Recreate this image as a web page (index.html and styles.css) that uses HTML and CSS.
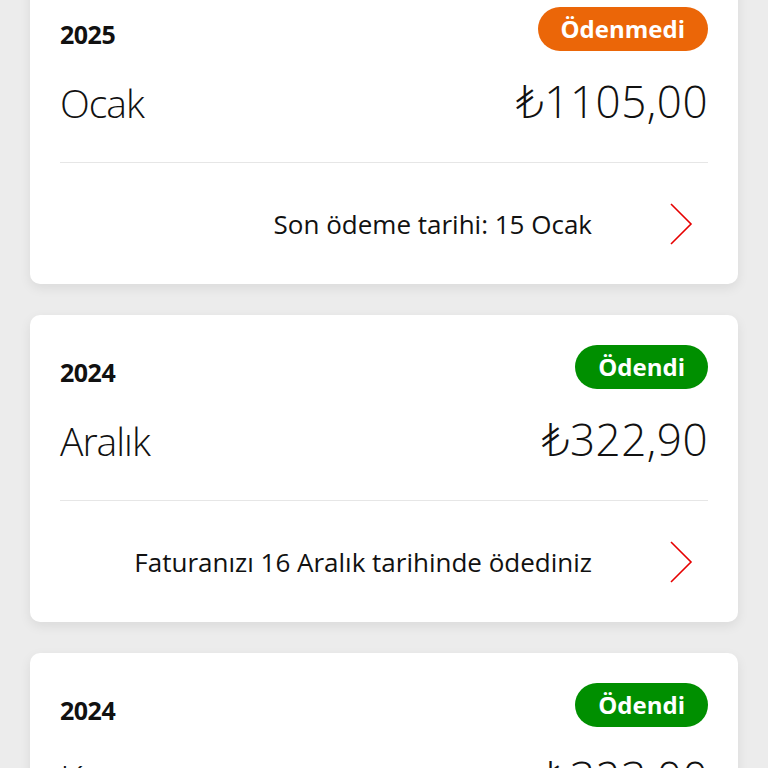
FILE: index.html
```html
<!DOCTYPE html>
<html lang="tr">
<head>
  <meta charset="utf-8">
  <title>Faturalarım</title>
  <link rel="stylesheet" href="styles.css">
</head>
<body>
  <div class="bill-list">

    <div class="bill-card">
      <div class="bill-head">
        <span class="bill-year">2025</span>
        <span class="status unpaid">Ödenmedi</span>
      </div>
      <div class="bill-main">
        <span class="bill-month">Ocak</span>
        <span class="bill-amount">₺1105,00</span>
      </div>
      <div class="bill-foot">
        <span class="bill-note">Son ödeme tarihi: 15 Ocak</span>
        <svg class="chevron" viewBox="0 0 24 42" width="24" height="42"><path d="M2 1 L22 21 L2 41" fill="none" stroke="#e60000" stroke-width="1.6"/></svg>
      </div>
    </div>

    <div class="bill-card">
      <div class="bill-head">
        <span class="bill-year">2024</span>
        <span class="status paid">Ödendi</span>
      </div>
      <div class="bill-main">
        <span class="bill-month">Aralık</span>
        <span class="bill-amount">₺322,90</span>
      </div>
      <div class="bill-foot">
        <span class="bill-note">Faturanızı 16 Aralık tarihinde ödediniz</span>
        <svg class="chevron" viewBox="0 0 24 42" width="24" height="42"><path d="M2 1 L22 21 L2 41" fill="none" stroke="#e60000" stroke-width="1.6"/></svg>
      </div>
    </div>

    <div class="bill-card">
      <div class="bill-head">
        <span class="bill-year">2024</span>
        <span class="status paid">Ödendi</span>
      </div>
      <div class="bill-main">
        <span class="bill-month">Kasım</span>
        <span class="bill-amount">₺323,00</span>
      </div>
      <div class="bill-foot">
        <span class="bill-note">Faturanızı 18 Kasım tarihinde ödediniz</span>
        <svg class="chevron" viewBox="0 0 24 42" width="24" height="42"><path d="M2 1 L22 21 L2 41" fill="none" stroke="#e60000" stroke-width="1.6"/></svg>
      </div>
    </div>

  </div>
</body>
</html>
```

FILE: styles.css
```css
html, body {
  margin: 0;
  padding: 0;
  background: #ececec;
  height: 768px;
  overflow: hidden;
}

body {
  font-family: "Open Sans", "DejaVu Sans", sans-serif;
  color: #111111;
}

.bill-list {
  display: flex;
  flex-direction: column;
  gap: 31px;
  padding: 0 30px;
  margin-top: -23px;
}

.bill-card {
  background: #ffffff;
  border-radius: 10px;
  box-shadow: 0 4px 12px rgba(0,0,0,0.08);
  padding: 30px 30px 0 30px;
}

.bill-head {
  display: flex;
  justify-content: space-between;
  align-items: flex-end;
  height: 44px;
}

.bill-year {
  font-size: 25px;
  font-weight: 700;
  line-height: 1;
  margin-bottom: 4px;
  letter-spacing: -0.5px;
}

.status {
  display: inline-block;
  height: 44px;
  line-height: 43px;
  padding: 0 23px;
  border-radius: 22px;
  color: #ffffff;
  font-size: 24px;
  font-weight: 700;
}

.status.unpaid {
  background: #eb6608;
}

.status.paid {
  background: #008f00;
}

.bill-main {
  display: flex;
  justify-content: space-between;
  align-items: baseline;
  padding: 24px 0 33px 0;
  border-bottom: 1px solid #e6e6e6;
}

.bill-month {
  font-size: 39px;
  font-weight: 300;
  line-height: 52px;
  letter-spacing: -1px;
}

.bill-amount {
  font-size: 44px;
  font-weight: 300;
  line-height: 52px;
  letter-spacing: 0.5px;
}

.bill-foot {
  display: flex;
  justify-content: flex-end;
  align-items: center;
  gap: 77px;
  height: 121px;
  padding-right: 15px;
}

.bill-note {
  font-size: 26px;
  font-weight: 400;
}

.chevron {
  display: block;
}
```
